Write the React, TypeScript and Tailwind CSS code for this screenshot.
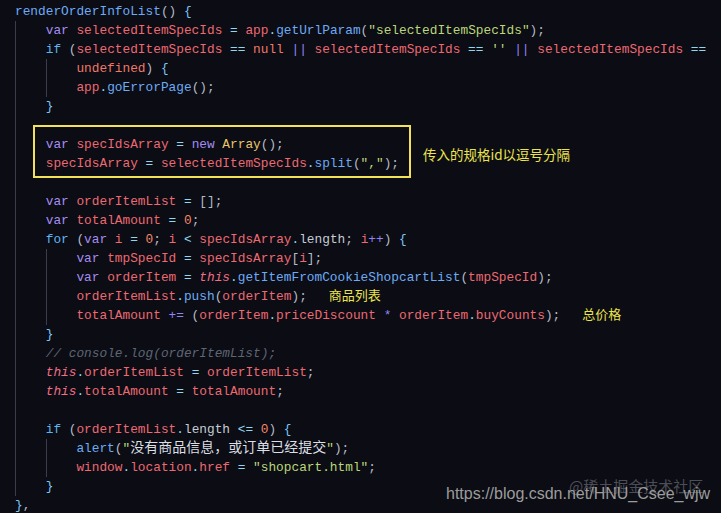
import React from 'react';

type Tok = [string, string];

// token colours
const kw = 'text-[#a48cf0]'; // var, new
const ctl = 'text-[#5fb4f0]'; // if, for
const id = 'text-[#ec6a72]';
const fn = 'text-[#6eabf5]';
const str = 'text-[#bcd77a]';
const op = 'text-[#8fd8f0]';
const pur = 'text-[#9183f2]';
const num = 'text-[#f4876a]';
const lit = 'text-[#ef7868]';
const pn = 'text-[#b4bac6]';
const br = 'text-[#7cc6f6]';
const dot = 'text-[#8fd8f0]';
const self = 'text-[#ef6f86] italic';
const cls = 'text-[#e8c46c]';
const prop = 'text-[#c8ccd4]';
const cmt = 'text-[#5e6573] italic';
const cjk = 'text-[#dcdfe3] text-[14px]';

type Line = { lvl: number; guides: number[]; toks: Tok[]; note?: string };

const g0 = [0];
const g01 = [0, 1];

const lines: Line[] = [
  { lvl: 0, guides: [], toks: [['renderOrderInfoList', fn], ['() ', pn], ['{', br]] },
  {
    lvl: 1,
    guides: g0,
    toks: [
      ['var ', kw], ['selectedItemSpecIds', id], [' = ', op], ['app', id], ['.', dot],
      ['getUrlParam', fn], ['(', pn], ['"selectedItemSpecIds"', str], [')', pn], [';', pn],
    ],
  },
  {
    lvl: 1,
    guides: g0,
    toks: [
      ['if ', ctl], ['(', pn], ['selectedItemSpecIds', id], [' == ', op], ['null', lit], [' || ', pur],
      ['selectedItemSpecIds', id], [' == ', op], ["''", str], [' || ', pur], ['selectedItemSpecIds', id],
      [' ==', op],
    ],
  },
  { lvl: 2, guides: g01, toks: [['undefined', lit], [') ', pn], ['{', br]] },
  { lvl: 2, guides: g01, toks: [['app', id], ['.', dot], ['goErrorPage', fn], ['();', pn]] },
  { lvl: 1, guides: g0, toks: [['}', br]] },
  { lvl: 1, guides: g0, toks: [] },
  {
    lvl: 1,
    guides: g0,
    toks: [['var ', kw], ['specIdsArray', id], [' = ', op], ['new ', kw], ['Array', cls], ['();', pn]],
  },
  {
    lvl: 1,
    guides: g0,
    toks: [
      ['specIdsArray', id], [' = ', op], ['selectedItemSpecIds', id], ['.', dot], ['split', fn],
      ['(', pn], ['","', str], [');', pn],
    ],
  },
  { lvl: 1, guides: g0, toks: [] },
  { lvl: 1, guides: g0, toks: [['var ', kw], ['orderItemList', id], [' = ', op], ['[];', pn]] },
  { lvl: 1, guides: g0, toks: [['var ', kw], ['totalAmount', id], [' = ', op], ['0', num], [';', pn]] },
  {
    lvl: 1,
    guides: g0,
    toks: [
      ['for ', ctl], ['(', pn], ['var ', kw], ['i', id], [' = ', op], ['0', num], ['; ', pn], ['i', id],
      [' < ', op], ['specIdsArray', id], ['.', dot], ['length', prop], ['; ', pn], ['i', id], ['++', pur],
      [') ', pn], ['{', br],
    ],
  },
  {
    lvl: 2,
    guides: g01,
    toks: [['var ', kw], ['tmpSpecId', id], [' = ', op], ['specIdsArray', id], ['[', pn], ['i', id], ['];', pn]],
  },
  {
    lvl: 2,
    guides: g01,
    toks: [
      ['var ', kw], ['orderItem', id], [' = ', op], ['this', self], ['.', dot],
      ['getItemFromCookieShopcartList', fn], ['(', pn], ['tmpSpecId', id], [');', pn],
    ],
  },
  {
    lvl: 2,
    guides: g01,
    toks: [['orderItemList', id], ['.', dot], ['push', fn], ['(', pn], ['orderItem', id], [');', pn]],
    note: '商品列表',
  },
  {
    lvl: 2,
    guides: g01,
    toks: [
      ['totalAmount', id], [' += ', pur], ['(', pn], ['orderItem', id], ['.', dot], ['priceDiscount', id],
      [' * ', pur], ['orderItem', id], ['.', dot], ['buyCounts', id], [');', pn],
    ],
    note: '总价格',
  },
  { lvl: 1, guides: g0, toks: [['}', br]] },
  { lvl: 1, guides: g0, toks: [['// console.log(orderItemList);', cmt]] },
  {
    lvl: 1,
    guides: g0,
    toks: [['this', self], ['.', dot], ['orderItemList', id], [' = ', op], ['orderItemList', id], [';', pn]],
  },
  {
    lvl: 1,
    guides: g0,
    toks: [['this', self], ['.', dot], ['totalAmount', id], [' = ', op], ['totalAmount', id], [';', pn]],
  },
  { lvl: 1, guides: g0, toks: [] },
  {
    lvl: 1,
    guides: g0,
    toks: [
      ['if ', ctl], ['(', pn], ['orderItemList', id], ['.', dot], ['length', prop], [' <= ', op], ['0', num],
      [') ', pn], ['{', br],
    ],
  },
  {
    lvl: 2,
    guides: g01,
    toks: [['alert', fn], ['(', pn], ['"', str], ['没有商品信息，或订单已经提交', cjk], ['"', str], [');', pn]],
  },
  {
    lvl: 2,
    guides: g01,
    toks: [
      ['window', id], ['.', dot], ['location', id], ['.', dot], ['href', id], [' = ', op],
      ['"shopcart.html"', str], [';', pn],
    ],
  },
  { lvl: 1, guides: g0, toks: [['}', br]] },
  { lvl: 0, guides: [], toks: [['}', br], [',', pn]] },
];

function CodeLine({ line }: { line: Line }) {
  const cells = Array.from({ length: line.lvl }, (_, i) => i);
  return (
    <div className="flex h-[19px] items-center whitespace-pre">
      {cells.map((i) => (
        <span
          key={i}
          className={
            line.guides.includes(i)
              ? 'h-full w-[4ch] shrink-0 border-l border-[#3b3e4a]'
              : 'h-full w-[4ch] shrink-0'
          }
        />
      ))}
      {line.toks.map(([t, c], i) => (
        <span key={i} className={c}>
          {t}
        </span>
      ))}
      {line.note && (
        <span className="relative -top-[2px] ml-[22px] text-[13px] text-[#ece44e] [font-family:'Noto_Sans_CJK_SC',sans-serif]">
          {line.note}
        </span>
      )}
    </div>
  );
}

export default function App() {
  return (
    <div className="relative h-[513px] w-[721px] overflow-hidden bg-[#0b0c14]">
      <div className="pl-[15px] pt-[2px] text-[12.8px] leading-[19px] [font-family:'Liberation_Mono','Noto_Sans_CJK_SC',monospace]">
        {lines.map((l, i) => (
          <CodeLine key={i} line={l} />
        ))}
      </div>

      {/* annotation box */}
      <div className="absolute left-[33px] top-[125px] h-[53px] w-[378px] border-2 border-[#f2e25a]" />
      <div className="absolute left-[423px] top-[144px] text-[13.5px] leading-[20px] text-[#ece44e] [font-family:'Noto_Sans_CJK_SC',sans-serif]">
        传入的规格id以逗号分隔
      </div>

      {/* watermarks */}
      <div className="absolute left-[569px] top-[476px] text-[15px] leading-[20px] text-[#4b4e56] [font-family:'Noto_Sans_CJK_SC',sans-serif]">
        @稀土掘金技术社区
      </div>
      <div className="absolute left-[446px] top-[484px] text-[16px] leading-[20px] text-[#9c9c9c] [font-family:'Liberation_Sans',sans-serif]">
        https://blog.csdn.net/HNU_Csee_wjw
      </div>
    </div>
  );
}
